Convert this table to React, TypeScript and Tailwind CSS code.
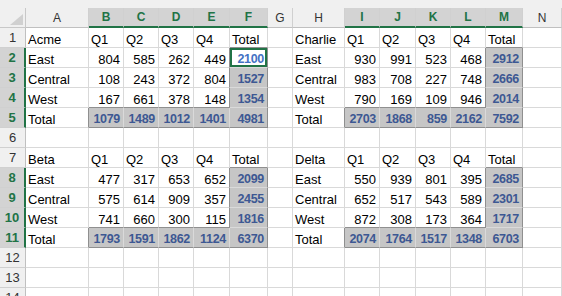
import React from 'react';

type Kind = 'label' | 'num' | 'total';
interface Cell {
  text: string;
  kind: Kind;
}

const COLS = ['A', 'B', 'C', 'D', 'E', 'F', 'G', 'H', 'I', 'J', 'K', 'L', 'M', 'N'];
const ROW_COUNT = 14;
const SEL_COLS = new Set([2, 3, 4, 5, 6, 9, 10, 11, 12, 13]);
const SEL_ROWS = new Set([2, 3, 4, 5, 8, 9, 10, 11]);

const blocks = [
  {
    name: 'Acme', row: 1, col: 1,
    data: [[804, 585, 262, 449, 2100], [108, 243, 372, 804, 1527], [167, 661, 378, 148, 1354], [1079, 1489, 1012, 1401, 4981]],
  },
  {
    name: 'Charlie', row: 1, col: 8,
    data: [[930, 991, 523, 468, 2912], [983, 708, 227, 748, 2666], [790, 169, 109, 946, 2014], [2703, 1868, 859, 2162, 7592]],
  },
  {
    name: 'Beta', row: 7, col: 1,
    data: [[477, 317, 653, 652, 2099], [575, 614, 909, 357, 2455], [741, 660, 300, 115, 1816], [1793, 1591, 1862, 1124, 6370]],
  },
  {
    name: 'Delta', row: 7, col: 8,
    data: [[550, 939, 801, 395, 2685], [652, 517, 543, 589, 2301], [872, 308, 173, 364, 1717], [2074, 1764, 1517, 1348, 6703]],
  },
];

const cells: Record<string, Cell> = {};
const sel = new Set<string>();
const k = (r: number, c: number) => `${r}-${c}`;

blocks.forEach((b) => {
  cells[k(b.row, b.col)] = { text: b.name, kind: 'label' };
  ['Q1', 'Q2', 'Q3', 'Q4', 'Total'].forEach((h, i) => {
    cells[k(b.row, b.col + 1 + i)] = { text: h, kind: 'label' };
  });
  ['East', 'Central', 'West', 'Total'].forEach((label, ri) => {
    const r = b.row + 1 + ri;
    cells[k(r, b.col)] = { text: label, kind: 'label' };
    b.data[ri].forEach((v, ci) => {
      const isTotal = ri === 3 || ci === 4;
      cells[k(r, b.col + 1 + ci)] = { text: String(v), kind: isTotal ? 'total' : 'num' };
      if (isTotal) sel.add(k(r, b.col + 1 + ci));
    });
  });
});

const ACTIVE = k(2, 6);

function Corner() {
  return (
    <div className="h-[28px] bg-[#f0f0f0] flex flex-col">
      <div className="h-[8px]" />
      <div className="flex-1 border-r border-b border-[#c8c8c8] flex items-end justify-end pr-[2px] pb-[2px]">
        <svg width="13" height="11" viewBox="0 0 13 11">
          <polygon points="13,0 13,11 0,11" fill="#d0d0d0" />
        </svg>
      </div>
    </div>
  );
}

function ColHeader({ letter, index }: { letter: string; index: number }) {
  const on = SEL_COLS.has(index);
  return (
    <div className="h-[28px] bg-[#f0f0f0] flex flex-col">
      <div className="h-[8px]" />
      <div
        className={
          'flex-1 border-r border-[#d0d0d0] flex items-center justify-center text-[12px] ' +
          (on
            ? 'bg-[#d3d3d3] border-b-2 border-b-[#217346] text-[#217346] font-bold'
            : 'border-b border-b-[#c0c0c0] text-[#333]')
        }
      >
        {letter}
      </div>
    </div>
  );
}

function RowHeader({ row }: { row: number }) {
  const on = SEL_ROWS.has(row);
  return (
    <div
      className={
        'h-[20px] flex items-center justify-center text-[13px] border-b border-b-[#d0d0d0] ' +
        (on
          ? 'bg-[#d3d3d3] border-r-2 border-r-[#217346] text-[#217346] font-bold'
          : 'bg-[#f0f0f0] border-r border-r-[#c0c0c0] text-[#333]')
      }
    >
      {row}
    </div>
  );
}

function SheetCell({ r, c }: { r: number; c: number }) {
  const key = k(r, c);
  const cell = cells[key];
  const inSel = sel.has(key);
  const active = key === ACTIVE;
  const edgeR = inSel !== sel.has(k(r, c + 1));
  const edgeB = inSel !== sel.has(k(r + 1, c));

  const rightCls = edgeR ? 'border-r-[#8f8f8f]' : inSel ? 'border-r-[#dadada]' : 'border-r-[#d9d9d9]';
  const bottomCls = edgeB ? 'border-b-[#8f8f8f]' : inSel ? 'border-b-[#dadada]' : 'border-b-[#d9d9d9]';

  let textCls = 'text-black text-[13px]';
  if (cell?.kind === 'total')
    textCls =
      'text-[12.5px] tracking-[-0.3px] font-bold ' + (active ? 'text-[#4472c4]' : 'text-[#3d5893]');

  return (
    <div
      className={
        'h-[20px] border-r border-b flex items-end overflow-hidden whitespace-nowrap leading-[15px] ' +
        rightCls + ' ' + bottomCls + ' ' +
        (inSel && !active ? 'bg-[#c6c6c6] ' : 'bg-white ') +
        (active ? 'shadow-[inset_0_0_0_2px_#217346] ' : '') +
        (cell && cell.kind !== 'label' ? 'justify-end pr-[3px] ' : 'justify-start pl-[2px] ') +
        textCls
      }
    >
      {cell?.text}
    </div>
  );
}

export default function App() {
  const rows = Array.from({ length: ROW_COUNT }, (_, i) => i + 1);
  return (
    <div
      className="w-[562px] h-[296px] overflow-hidden bg-white"
      style={{ fontFamily: '"Liberation Sans", Arial, sans-serif' }}
    >
      <div className="grid grid-cols-[26px_63px_35px_35px_35px_36px_38px_25px_52px_35px_36px_35px_35px_37px_1fr]">
        <Corner />
        {COLS.map((l, i) => (
          <ColHeader key={l} letter={l} index={i + 1} />
        ))}
        {rows.map((r) => (
          <React.Fragment key={r}>
            <RowHeader row={r} />
            {COLS.map((_, i) => (
              <SheetCell key={i} r={r} c={i + 1} />
            ))}
          </React.Fragment>
        ))}
      </div>
    </div>
  );
}
